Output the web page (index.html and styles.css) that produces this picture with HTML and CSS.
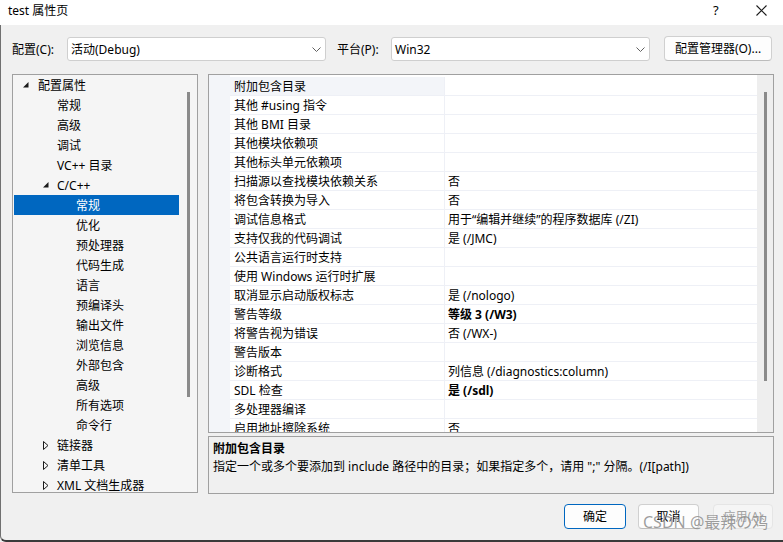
FILE: index.html
```html
<!DOCTYPE html>
<html lang="zh-CN">
<head>
<meta charset="utf-8">
<title>test 属性页</title>
<link rel="stylesheet" href="styles.css">
</head>
<body>
<div class="window">
  <div class="titlebar">
    <span class="title">test 属性页</span>
    <span class="help">?</span>
    <span class="close"><svg width="11" height="11" viewBox="0 0 11 11"><path d="M0.5 0.5 L10.5 10.5 M10.5 0.5 L0.5 10.5" stroke="#1a1a1a" stroke-width="1.1" fill="none"/></svg></span>
  </div>
  <div class="client">
    <div class="config-row">
      <span class="lbl lbl-config">配置(C):</span>
      <div class="combo"><span class="combo-text">活动(Debug)</span><svg class="chev" width="9" height="5" viewBox="0 0 9 5"><path d="M0.5 0.5 L4.5 4.5 L8.5 0.5" stroke="#606060" fill="none"/></svg></div>
      <span class="lbl lbl-platform">平台(P):</span>
      <div class="combo"><span class="combo-text">Win32</span><svg class="chev" width="9" height="5" viewBox="0 0 9 5"><path d="M0.5 0.5 L4.5 4.5 L8.5 0.5" stroke="#606060" fill="none"/></svg></div>
      <button class="btn btn-manager">配置管理器(O)...</button>
    </div>

    <div class="content">
      <div class="tree">
        <div class="tree-rows">
          <div class="node l0"><span class="tog"><svg width="6" height="6" viewBox="0 0 6 6"><polygon points="5.5,0 5.5,5.5 0,5.5" fill="#1a1a1a"/></svg></span>配置属性</div>
          <div class="node l1"><span class="tog"></span>常规</div>
          <div class="node l1"><span class="tog"></span>高级</div>
          <div class="node l1"><span class="tog"></span>调试</div>
          <div class="node l1"><span class="tog"></span>VC++ 目录</div>
          <div class="node l1"><span class="tog tog-exp"><svg width="6" height="6" viewBox="0 0 6 6"><polygon points="5.5,0 5.5,5.5 0,5.5" fill="#1a1a1a"/></svg></span>C/C++</div>
          <div class="node l2 selected"><span class="tog"></span>常规</div>
          <div class="node l2"><span class="tog"></span>优化</div>
          <div class="node l2"><span class="tog"></span>预处理器</div>
          <div class="node l2"><span class="tog"></span>代码生成</div>
          <div class="node l2"><span class="tog"></span>语言</div>
          <div class="node l2"><span class="tog"></span>预编译头</div>
          <div class="node l2"><span class="tog"></span>输出文件</div>
          <div class="node l2"><span class="tog"></span>浏览信息</div>
          <div class="node l2"><span class="tog"></span>外部包含</div>
          <div class="node l2"><span class="tog"></span>高级</div>
          <div class="node l2"><span class="tog"></span>所有选项</div>
          <div class="node l2"><span class="tog"></span>命令行</div>
          <div class="node l1"><span class="tog tog-col"><svg width="6" height="9" viewBox="0 0 6 9"><polygon points="0.5,0.5 5,4.5 0.5,8.5" fill="none" stroke="#1a1a1a"/></svg></span>链接器</div>
          <div class="node l1"><span class="tog tog-col"><svg width="6" height="9" viewBox="0 0 6 9"><polygon points="0.5,0.5 5,4.5 0.5,8.5" fill="none" stroke="#1a1a1a"/></svg></span>清单工具</div>
          <div class="node l1"><span class="tog tog-col"><svg width="6" height="9" viewBox="0 0 6 9"><polygon points="0.5,0.5 5,4.5 0.5,8.5" fill="none" stroke="#1a1a1a"/></svg></span>XML 文档生成器</div>
        </div>
        <div class="tree-scroll"><div class="thumb tree-thumb"></div></div>
      </div>

      <div class="right">
        <div class="grid">
          <div class="grid-body">
            <div class="prow active"><span class="gut"></span><span class="pname">附加包含目录</span><span class="pval"></span></div>
            <div class="prow"><span class="gut"></span><span class="pname">其他 #using 指令</span><span class="pval"></span></div>
            <div class="prow"><span class="gut"></span><span class="pname">其他 BMI 目录</span><span class="pval"></span></div>
            <div class="prow"><span class="gut"></span><span class="pname">其他模块依赖项</span><span class="pval"></span></div>
            <div class="prow"><span class="gut"></span><span class="pname">其他标头单元依赖项</span><span class="pval"></span></div>
            <div class="prow"><span class="gut"></span><span class="pname">扫描源以查找模块依赖关系</span><span class="pval">否</span></div>
            <div class="prow"><span class="gut"></span><span class="pname">将包含转换为导入</span><span class="pval">否</span></div>
            <div class="prow"><span class="gut"></span><span class="pname">调试信息格式</span><span class="pval">用于“编辑并继续”的程序数据库 (/ZI)</span></div>
            <div class="prow"><span class="gut"></span><span class="pname">支持仅我的代码调试</span><span class="pval">是 (/JMC)</span></div>
            <div class="prow"><span class="gut"></span><span class="pname">公共语言运行时支持</span><span class="pval"></span></div>
            <div class="prow"><span class="gut"></span><span class="pname">使用 Windows 运行时扩展</span><span class="pval"></span></div>
            <div class="prow"><span class="gut"></span><span class="pname">取消显示启动版权标志</span><span class="pval">是 (/nologo)</span></div>
            <div class="prow"><span class="gut"></span><span class="pname">警告等级</span><span class="pval bold">等级 3 (/W3)</span></div>
            <div class="prow"><span class="gut"></span><span class="pname">将警告视为错误</span><span class="pval">否 (/WX-)</span></div>
            <div class="prow"><span class="gut"></span><span class="pname">警告版本</span><span class="pval"></span></div>
            <div class="prow"><span class="gut"></span><span class="pname">诊断格式</span><span class="pval">列信息 (/diagnostics:column)</span></div>
            <div class="prow"><span class="gut"></span><span class="pname">SDL 检查</span><span class="pval bold">是 (/sdl)</span></div>
            <div class="prow"><span class="gut"></span><span class="pname">多处理器编译</span><span class="pval"></span></div>
            <div class="prow"><span class="gut"></span><span class="pname">启用地址擦除系统</span><span class="pval">否</span></div>
          </div>
          <div class="grid-scroll"><div class="thumb grid-thumb"></div></div>
        </div>
        <div class="desc">
          <div class="desc-title">附加包含目录</div>
          <div class="desc-text">指定一个或多个要添加到 include 路径中的目录；如果指定多个，请用 ";" 分隔。(/I[path])</div>
        </div>
      </div>
    </div>

    <div class="buttons">
      <button class="btn btn-ok">确定</button>
      <button class="btn btn-cancel">取消</button>
      <button class="btn btn-apply" disabled>应用(A)</button>
    </div>
  </div>
  <div class="watermark">CSDN @最辣の鸡</div>
</div>
</body>
</html>
```

FILE: styles.css
```css
* { box-sizing: border-box; }

body {
  margin: 0;
  width: 783px;
  height: 542px;
  overflow: hidden;
  font-family: "Noto Sans", "Noto Sans CJK SC", sans-serif;
  font-size: 12px;
  color: #000;
  background: #f0f0f0;
}

.window {
  position: relative;
  width: 783px;
  height: 542px;
  display: flex;
  flex-direction: column;
}

.titlebar {
  height: 25px;
  background: #fff;
  display: flex;
  align-items: center;
  padding-left: 8px;
  flex: none;
}

.title { flex: 1; font-size: 12px; line-height: 16px; padding-bottom: 3px; }

.help {
  width: 10px;
  margin-right: 33px;
  font-size: 13px;
  line-height: 16px;
  padding-bottom: 5px;
}

.close {
  width: 11px;
  height: 11px;
  margin-right: 16px;
  margin-bottom: 5px;
  display: flex;
}

.client {
  flex: 1;
  background: #f0f0f0;
  border-left: 1px solid #707070;
  border-bottom: 2px solid #3a3a3a;
  border-bottom-left-radius: 6px;
  padding: 12px 0 0 11px;
  display: flex;
  flex-direction: column;
}

.config-row {
  display: flex;
  align-items: center;
  height: 24px;
}

.lbl { flex: none; line-height: 16px; padding-top: 2px; }
.lbl-config { width: 55px; }
.lbl-platform { width: 54px; margin-left: 11px; }

.combo {
  width: 259px;
  height: 24px;
  background: #fff;
  border: 1px solid #cfcfcf;
  border-radius: 3px;
  display: flex;
  align-items: center;
  padding: 0 0 0 3px;
}

.combo-text { flex: 1; line-height: 16px; padding-top: 2px; }
.chev { margin-right: 4px; }

.btn {
  font-family: "Noto Sans", "Noto Sans CJK SC", sans-serif;
  font-size: 12px;
  color: #000;
  background: #fdfdfd;
  border: 1px solid #d0d0d0;
  border-bottom-color: #bcbcbc;
  border-radius: 4px;
  padding: 1px 0 0 0;
  height: 25px;
  line-height: 16px;
}

.btn-manager {
  width: 108px;
  margin-left: 14px;
  margin-top: -1px;
}

.content {
  display: flex;
  margin-top: 13px;
}

.tree {
  width: 186px;
  height: 419px;
  border: 1px solid #a0a0a0;
  background: #f5f5f5;
  display: flex;
  overflow: hidden;
  flex: none;
}

.tree-rows {
  width: 166px;
  padding-left: 1px;
}

.node {
  height: 20px;
  display: flex;
  align-items: center;
  white-space: nowrap;
  line-height: 16px;
  padding-top: 2px;
}

.node.l0 { padding-left: 7px; }
.node.l1 { padding-left: 26px; }
.node.l2 { padding-left: 45px; }

.node.selected {
  background: #0067c0;
  color: #fff;
}

.tog {
  width: 17px;
  flex: none;
  display: flex;
  align-items: center;
  padding-left: 2px;
  margin-top: -2px;
}

.tog-exp { padding-left: 3px; }
.tog-col { padding-left: 3px; }

.tree-scroll {
  width: 18px;
  padding: 17px 0 0 8px;
}

.thumb { width: 3px; background: #8a8a8a; }
.tree-thumb { height: 305px; }

.right {
  margin-left: 10px;
  width: 566px;
  display: flex;
  flex-direction: column;
}

.grid {
  height: 359px;
  border: 1px solid #a0a0a0;
  display: flex;
  overflow: hidden;
}

.grid-body {
  flex: 1;
  padding-top: 2px;
  background: linear-gradient(to right, #f3f5f9 21px, #ffffff 21px);
  overflow: hidden;
}

.prow {
  display: flex;
  height: 19px;
}

.gut { width: 21px; flex: none; }

.pname {
  width: 214px;
  flex: none;
  padding-left: 4px;
  padding-top: 1px;
  border-bottom: 1px solid #eef0f6;
  line-height: 17px;
  white-space: nowrap;
  overflow: hidden;
}

.prow.active .pname { background: #f3f5f9; }

.pval {
  flex: 1;
  padding-left: 3px;
  padding-top: 1px;
  border-left: 1px solid #eef0f6;
  border-bottom: 1px solid #eef0f6;
  line-height: 17px;
  white-space: nowrap;
  overflow: hidden;
}

.bold { font-weight: bold; }

.grid-scroll {
  width: 16px;
  flex: none;
  background: #eeeeee;
  padding: 17px 0 0 7px;
}

.grid-thumb { height: 289px; }

.desc {
  margin-top: 3px;
  height: 58px;
  border: 1px solid #a0a0a0;
  background: #f0f0f0;
  padding: 3px 0 0 4px;
}

.desc-title { font-weight: bold; line-height: 18px; }
.desc-text { line-height: 18px; white-space: nowrap; }

.buttons {
  display: flex;
  justify-content: flex-end;
  margin-top: 10px;
  padding-right: 10px;
}

.btn-ok {
  width: 62px;
  border: 1px solid #0067c0;
}

.btn-cancel {
  width: 61px;
  margin-left: 12px;
}

.btn-apply {
  width: 60px;
  margin-left: 14px;
  background: #f5f5f5;
  color: #a3a3a3;
  border-color: #e5e5e5;
}

.watermark {
  position: absolute;
  left: 643px;
  top: 512px;
  font-family: "Noto Sans", "Noto Sans CJK JP", sans-serif;
  font-size: 16px;
  line-height: 21px;
  color: rgba(120, 120, 120, 0.72);
  white-space: nowrap;
  text-shadow: 0 0 1px rgba(255,255,255,0.6);
}
```
